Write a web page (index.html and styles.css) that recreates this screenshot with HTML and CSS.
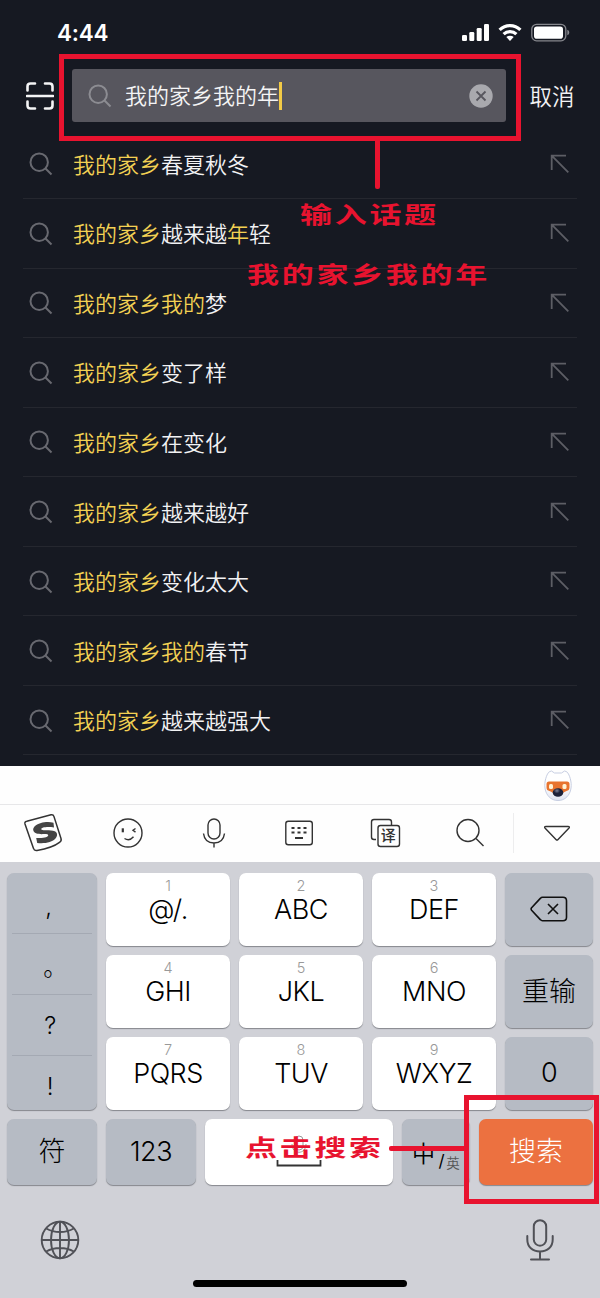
FILE: index.html
```html
<!DOCTYPE html>
<html lang="zh-CN">
<head>
<meta charset="utf-8">
<title>搜索</title>
<link rel="stylesheet" href="styles.css">
</head>
<body>
<svg class="defs" width="0" height="0">
  <symbol id="search" viewBox="0 0 24 24"><circle cx="10.2" cy="10.2" r="8.7"/><path d="M16.5 16.5 22.5 22.5"/></symbol>
  <symbol id="fill" viewBox="0 0 20 20"><path d="M1.7 16V1.7H16M2.2 2.2 18.3 18.3"/></symbol>
</svg>
<main class="phone">
  <header class="status">
    <span class="time">4:44</span>
    <svg class="signals" width="108" height="20" viewBox="0 0 108 20">
      <g fill="#fff">
        <rect x="0" y="12" width="5" height="6" rx="1.3"/><rect x="7.3" y="9" width="5" height="9" rx="1.3"/><rect x="14.7" y="5" width="5" height="13" rx="1.3"/><rect x="22" y="1" width="5" height="17" rx="1.3"/>
      </g>
      <g fill="none" stroke="#fff" stroke-width="3.2"><path d="M37.6 6.8a14.8 14.8 0 0 1 20.8 0"/><path d="M41.6 11.2a9.2 9.2 0 0 1 12.8 0"/></g>
      <path d="M44.3 14.1a5.4 5.4 0 0 1 7.4 0L48 18z" fill="#fff"/>
      <rect x="69.8" y="1.3" width="34" height="16.5" rx="4.8" fill="none" stroke="#85868c" stroke-width="1.3"/>
      <rect x="72" y="3.4" width="29" height="12.3" rx="2.8" fill="#fff"/>
      <path d="M105.3 6.8c2.6.8 2.6 4.7 0 5.5z" fill="#85868c"/>
    </svg>
  </header>
  <section class="searchbar">
    <svg class="scan" width="28" height="28" viewBox="0 0 28 28"><path d="M1.5 8.5V4.5q0-3 3-3H9M19 1.5h4.5q3 0 3 3v4M26.500 19.500v4q0 3-3 3H19M9 26.500H4.500q-3 0-3-3v-4M1 14h26"/></svg>
    <div class="field">
      <svg class="mag"><use href="#search"/></svg>
      <span class="query">我的家乡我的年</span><i class="caret"></i>
      <svg class="clear" width="24" height="24" viewBox="0 0 24 24"><circle cx="12" cy="12" r="11.700" fill="#a9a9ae"/><path d="m7.500 7.500 9 9m0-9-9 9" stroke="#57565e" stroke-width="1.800"/></svg>
    </div>
    <span class="cancel">取消</span>
    <div class="frame frame-top"></div>
  </section>
  <ul class="list">
    <li><svg class="mag"><use href="#search"/></svg><span><b>我的家乡</b>春夏秋冬</span><svg class="arrow"><use href="#fill"/></svg></li>
    <li><svg class="mag"><use href="#search"/></svg><span><b>我的家乡</b>越来越<b>年</b>轻</span><svg class="arrow"><use href="#fill"/></svg></li>
    <li><svg class="mag"><use href="#search"/></svg><span><b>我的家乡我的</b>梦</span><svg class="arrow"><use href="#fill"/></svg></li>
    <li><svg class="mag"><use href="#search"/></svg><span><b>我的家乡</b>变了样</span><svg class="arrow"><use href="#fill"/></svg></li>
    <li><svg class="mag"><use href="#search"/></svg><span><b>我的家乡</b>在变化</span><svg class="arrow"><use href="#fill"/></svg></li>
    <li><svg class="mag"><use href="#search"/></svg><span><b>我的家乡</b>越来越好</span><svg class="arrow"><use href="#fill"/></svg></li>
    <li><svg class="mag"><use href="#search"/></svg><span><b>我的家乡</b>变化太大</span><svg class="arrow"><use href="#fill"/></svg></li>
    <li><svg class="mag"><use href="#search"/></svg><span><b>我的家乡我的</b>春节</span><svg class="arrow"><use href="#fill"/></svg></li>
    <li><svg class="mag"><use href="#search"/></svg><span><b>我的家乡</b>越来越强大</span><svg class="arrow"><use href="#fill"/></svg></li>
  </ul>
  <section class="keyboard">
    <div class="strip">
      <svg width="32" height="34" viewBox="0 0 32 34">
        <defs><linearGradient id="face" x2="0" y2="1"><stop offset=".5" stop-color="#fff"/><stop offset="1" stop-color="#dfe3f0"/></linearGradient><radialGradient id="nose" cx=".4" cy=".3"><stop stop-color="#7d8299"/><stop offset=".6" stop-color="#1c2038"/></radialGradient></defs>
        <path d="M5.500 5Q7 2 9.500 2l3 2h7l3-2q2.500 0 4 3c3 6 3.500 13 1.500 18-2 5-6 8.500-12 8.500S6 28 4 23C2 18 2.500 11 5.500 5z" fill="url(#face)" stroke="#c7cee2"/>
        <path d="M7 12.500h18q2.500 0 2.500 2.500v3.500q0 3-3 3.500l-4 2h-9l-4-2q-3-.5-3-3.500V15q0-2.500 2.500-2.500z" fill="#e8742f"/>
        <rect x="7" y="15" width="4" height="5" rx="1.500" fill="#fff3d5"/><rect x="20.500" y="15" width="4" height="5" rx="1.500" fill="#fff3d5"/>
        <ellipse cx="16" cy="23.500" rx="5.300" ry="4.300" fill="url(#nose)"/>
      </svg>
    </div>
    <div class="tools">
      <svg viewBox="0 0 40 40"><path d="M3.800 8.300 28 1.800q2.300-.5 3 1.800l7 22q.8 2.500-1.500 3.800-7 5.500-22.500 8-2.800.5-3.500-2L2 11q-.7-2.200 1.800-2.700z" stroke-width="1.500"/><path d="M30.500 9.800c-4-1.100-9-.8-12.500.3-6 1.800-8.800 5-7.500 8 1.100 2.700 5.500 3.200 10 3 2.800-.1 4.500.1 4.700 1.100.3 1.800-4.500 3.300-12 2.700l1 5c7.500.9 15-.6 18.500-4.700 2.200-2.600 1.800-5.600-1-6.900-2.500-1.200-6-1.100-9.500-1.100-2.300 0-3.800-.2-3.900-1-.2-1.600 5-2.700 12.700-1.700z" fill="#444" stroke="none"/></svg>
      <svg viewBox="0 0 40 40"><circle cx="20" cy="20" r="14"/><path d="M14.800 15.300v4" stroke-width="2.200"/><path d="m27.500 15.500-2.500 1.800 2.500 1.800M16.500 25.500q5 3 9-1.700"/></svg>
      <svg viewBox="0 0 40 40"><rect x="14" y="6" width="12" height="20" rx="6"/><path d="M9.500 20.500c.8 6.500 5 9.500 10.500 9.500s9.700-3 10.500-9.500M20 30v4.500"/></svg>
      <svg viewBox="0 0 40 40"><rect x="6.800" y="8.200" width="26.500" height="23.500" rx="2.500"/><path d="M12.500 15h3m3 0h3m3 0h3M12.500 19.500h3m3 0h3m3 0h3M16 25h8" stroke-width="2.200"/></svg>
      <div class="translate"><svg viewBox="0 0 40 40"><path d="M11 26.500H9q-2.500 0-2.500-2.500V9q0-2.500 2.500-2.500h15q2.500 0 2.500 2.500v3"/><rect x="13" y="12.500" width="21.500" height="21" rx="2.500"/></svg><span>译</span></div>
      <svg viewBox="0 0 40 40"><circle cx="18" cy="17.500" r="11"/><path d="m26 25.500 7.500 7.500"/></svg>
      <svg class="hide" viewBox="0 0 40 40"><path d="M9 13.500h22q2.300 0 .8 1.800L20.800 26.700q-.8.800-1.600 0L8.200 15.300q-1.500-1.800.8-1.800z"/></svg>
    </div>
    <div class="keys">
      <div class="key gray punct"><span class="comma">,</span><span class="stop">。</span><span>?</span><span>!</span></div>
      <div class="key"><small>1</small>@/.</div><div class="key"><small>2</small>ABC</div><div class="key"><small>3</small>DEF</div>
      <div class="key gray"><svg width="38" height="26" viewBox="0 0 38 26"><path d="M12.500 1.200H33q3.500 0 3.500 3.500v16.600q0 3.500-3.500 3.500H12.500q-1.200 0-2.200-1.200L1.600 14.200q-1-1.200 0-2.400l8.700-9.400q1-1.200 2.200-1.200zM18 8l10 10M28 8 18 18" fill="none" stroke="#111" stroke-width="1.600"/></svg></div>
      <div class="key"><small>4</small>GHI</div><div class="key"><small>5</small>JKL</div><div class="key"><small>6</small>MNO</div><div class="key gray cn">重输</div>
      <div class="key"><small>7</small>PQRS</div><div class="key"><small>8</small>TUV</div><div class="key"><small>9</small>WXYZ</div><div class="key gray">0</div>
    </div>
    <div class="keys-last">
      <div class="key gray cn">符</div><div class="key gray">123</div>
      <div class="key space"><svg width="46" height="34" viewBox="0 0 46 34" fill="none"><rect x="19" y="1" width="8" height="14" rx="4" stroke="#999"/><path d="M16 9c0 11 14 11 14 0" stroke="#999"/><path d="M1.500 25v5.500h43V25" stroke="#333" stroke-width="1.800"/></svg></div>
      <div class="key gray lang"><span>中</span><i>/</i><em>英</em></div><div class="key go cn">搜索</div>
      <div class="frame frame-go"></div><div class="line line-go"></div><div class="note note-go">点击搜索</div>
    </div>
    <footer class="dock">
      <svg width="40" height="40" viewBox="0 0 40 40"><g fill="none" stroke="#505157" stroke-width="1.900"><circle cx="20" cy="20" r="18.300"/><ellipse cx="20" cy="20" rx="9" ry="18.300"/><path d="M20 1.700v36.600M1.700 20h36.600M6.200 8.500c8 4.700 19.600 4.700 27.600 0M6.200 31.500c8-4.700 19.600-4.700 27.600 0"/></g></svg>
      <svg width="28" height="42" viewBox="0 0 28 42"><g fill="none" stroke="#505157" stroke-width="2" stroke-linecap="round"><rect x="7.800" y="1.200" width="12.400" height="25.500" rx="6.200"/><path d="M1.300 17v3.500C1.300 28 6.500 32.500 14 32.500S26.700 28 26.700 20.500V17M14 33v7M5 40.500h18"/></g></svg>
    </footer>
    <div class="home"></div>
  </section>
  <div class="line line-top"></div>
  <div class="note note-a">输入话题</div>
  <div class="note note-b">我的家乡我的年</div>
</main>
</body>
</html>
```
FILE: styles.css
```css
* { box-sizing: border-box; }
body { margin: 0; background: #161922; font-family: "Inter", "Noto Sans CJK SC", sans-serif; }
.defs { position: absolute; }
svg { display: block; flex: none; }
.phone { position: relative; width: 600px; height: 1298px; overflow: hidden; display: flex; flex-direction: column; background: #161922; color: #f2f2f4; }

.status { height: 69px; flex: none; display: flex; justify-content: space-between; align-items: flex-start; padding: 23px 30px 0 57px; }
.time { font-size: 22.500px; line-height: 20px; font-weight: 600; color: #fff; letter-spacing: -.2px; }

.searchbar { position: relative; height: 60.500px; flex: none; display: flex; align-items: flex-start; padding-left: 26px; }
.scan { margin: 13px 18px 0 0; fill: none; stroke: #f4f4f5; stroke-width: 2.600; stroke-linecap: round; }
.field { width: 434px; height: 53px; display: flex; align-items: center; background: #57565e; border-radius: 3px; padding: 0 13px 0 16px; }
.mag { width: 24px; height: 24px; fill: none; stroke: #686970; stroke-width: 2; }
.field .mag { stroke: #8c8c92; margin-right: 13px; }
.query { font: 350 22px/30px "Noto Sans CJK SC", sans-serif; color: #f4f4f5; padding-bottom: 3px; }
.caret { width: 3px; height: 28px; background: #f2ca46; }
.clear { margin-left: auto; fill: none; }
.cancel { font: 350 22.500px/52px "Noto Sans CJK SC", sans-serif; margin-left: 23.500px; }

.list { list-style: none; margin: 0; padding: 0 23px; height: 636.500px; flex: none; }
.list li { height: 69.550px; display: flex; align-items: center; padding: 0 7px 0 6px; border-bottom: 1px solid #25272f; font: 350 22px/30px "Noto Sans CJK SC", sans-serif; }
.list .mag { margin-top: 1px; }
.list span { margin-left: 20px; padding-bottom: 2px; }
.list b { font-weight: 350; color: #f3d153; }
.arrow { width: 20px; height: 20px; margin-left: auto; fill: none; stroke: #5d5e65; stroke-width: 1.800; }

.keyboard { flex: 1; display: flex; flex-direction: column; background: #d0d1d7; color: #000; }
.strip { height: 39px; flex: none; background: #fefefe; border-bottom: 1px solid #e7e7e9; display: flex; justify-content: flex-end; padding: 3px 26px 0 0; }
.tools { height: 57px; flex: none; background: #fefefe; display: grid; grid-template-columns: repeat(6, 85.500px) 1fr; align-items: center; justify-items: center; padding-bottom: 2px; }
.tools svg { width: 40px; height: 40px; fill: none; stroke: #333; stroke-width: 1.400; }
.tools .hide { box-sizing: content-box; padding: 0 23px; border-left: 1px solid #ededee; }
.translate { display: grid; }
.translate > * { grid-area: 1 / 1; }
.translate span { font: 500 15px/20px "Noto Sans CJK SC", sans-serif; color: #333; padding: 12px 0 0 16px; }

.keys { display: grid; grid-template-columns: 90px repeat(3, 124px) 88px; grid-auto-rows: 73px; gap: 9px; padding: 10.500px 7px 0; }
.key { background: #fff; border-radius: 7px; box-shadow: 0 1px 1px #85878d; display: flex; flex-direction: column; align-items: center; justify-content: center; font-size: 27px; font-weight: 300; line-height: 30px; letter-spacing: -.5px; }
.keys .key { justify-content: flex-start; padding-top: 4px; }
.key small { font-size: 14.500px; line-height: 18px; color: #999; height: 18px; letter-spacing: 0; }
.keys .gray { justify-content: center; padding: 0; }
.gray { background: #b6bbc4; }
.key.cn { font-family: "Noto Sans CJK SC", sans-serif; letter-spacing: 0; padding-bottom: 3px; }
.keys .punct { grid-row: 1 / 4; justify-content: flex-start; padding: 0 5px; }
.punct span { width: 100%; height: 61.300px; flex: none; border-bottom: 1px solid #a4a9b3; text-align: center; padding: 16px 4px 0 0; font-size: 24px; font-family: Inter, "Noto Sans CJK SC", sans-serif; }
.punct .comma { padding: 19px 7px 0 0; }
.punct .stop { padding: 19px 0 0 6px; }
.punct span:last-child { border: 0; }
.keys-last { position: relative; display: grid; grid-template-columns: 90px 90px 188px 68px 114px; gap: 9px; height: 66px; margin: 9px 7px 0; }
.lang { flex-direction: row; align-items: center; justify-content: flex-start; padding-left: 10px; font: 350 23px/30px "Noto Sans CJK SC", sans-serif; }
.lang i { font: 400 17px/20px Inter, sans-serif; margin: 18px 0 0 4px; }
.lang em { font: 350 13.500px/20px "Noto Sans CJK SC", sans-serif; color: #555; margin: 20px 0 0 2px; }
.go { background: #ec7140; color: #fff; }
.dock { display: flex; justify-content: space-between; align-items: center; padding: 34px 46px 0 40px; }
.home { width: 214px; height: 7px; border-radius: 4px; background: #000; margin: 19px auto 0; }

/* Red tutorial callouts over the screen */
.frame { position: absolute; border: 5px solid #e8132f; }
.frame-top { left: 59px; top: -15px; width: 462px; height: 87px; }
.frame-go { left: 457px; top: -24px; width: 135px; height: 109px; }
.line { position: absolute; background: #e8132f; border-radius: 2px; }
.line-top { left: 375px; top: 139px; width: 5px; height: 50px; }
.line-go { left: 382px; top: 27px; width: 79px; height: 5px; }
.note { position: absolute; font: 700 32px/30px "Noto Sans CJK SC", sans-serif; letter-spacing: 2.700px; color: #e8132f; white-space: nowrap; transform: scaleY(.7); }
.note-a { left: 300px; top: 198px; }
.note-b { left: 247px; top: 258px; }
.note-go { left: 238px; top: 12px; }
```
